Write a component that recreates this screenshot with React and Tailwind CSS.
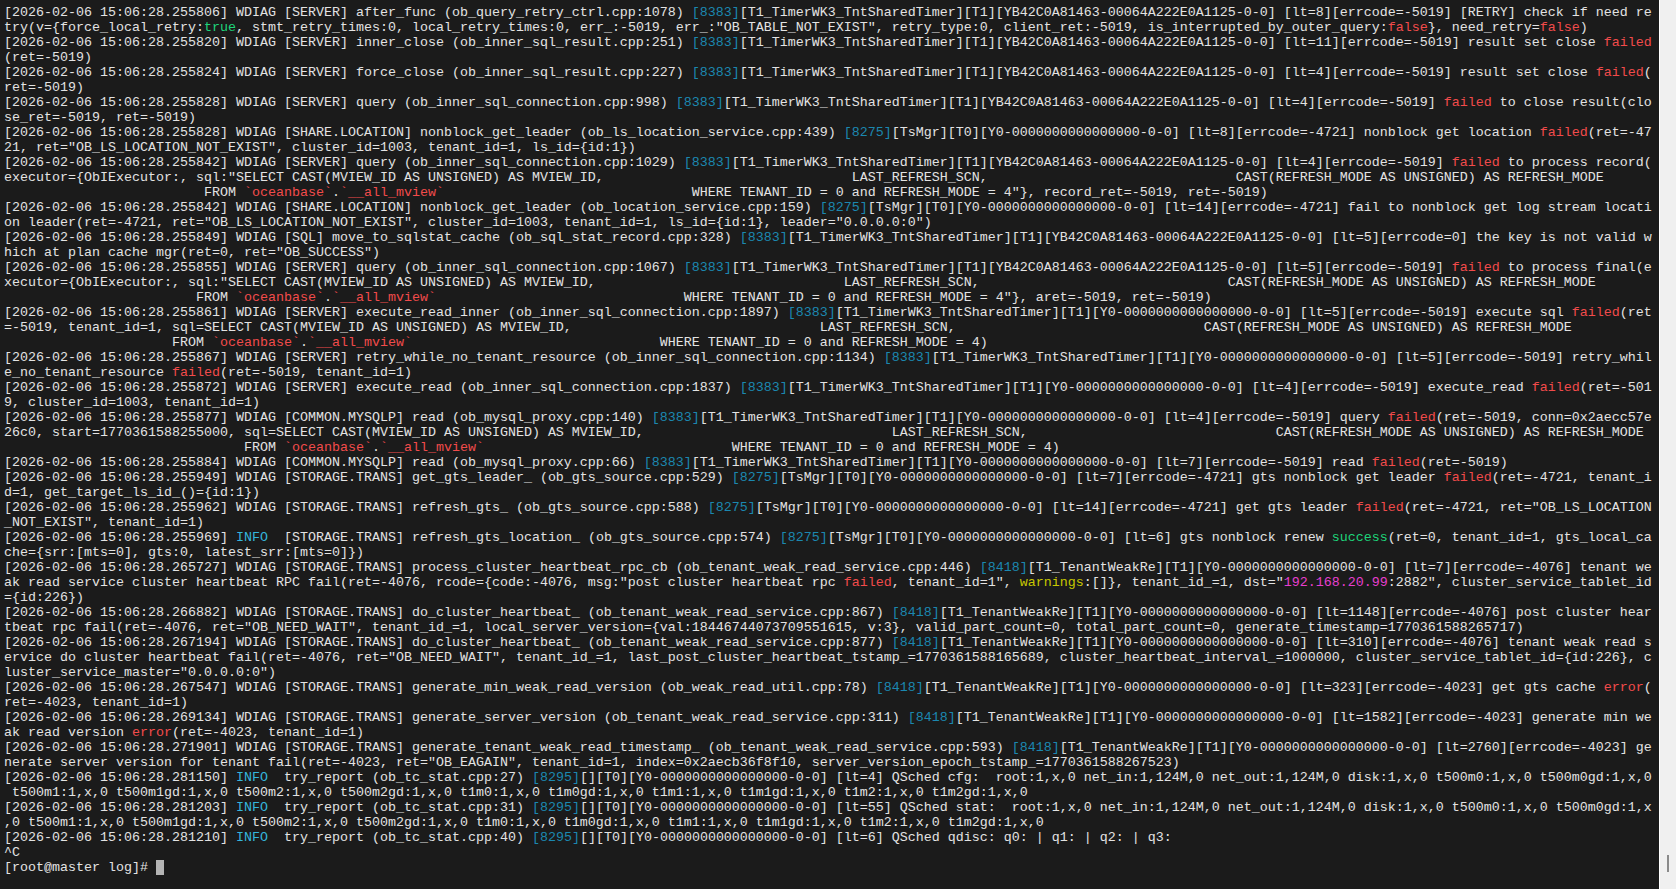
import React from "react";

const colors = {
  n: "text-[#1b88b0]",
  i: "text-[#35b5dc]",
  r: "text-[#f24b4b]",
  g: "text-[#1ed47a]",
  y: "text-[#c8c800]",
  m: "text-[#e83fd0]",
};

const gap = " ".repeat(31);

// {x:...} marks a coloured run
const lines = [
  "[2026-02-06 15:06:28.255806] WDIAG [SERVER] after_func (ob_query_retry_ctrl.cpp:1078) {n:[8383]}[T1_TimerWK3_TntSharedTimer][T1][YB42C0A81463-00064A222E0A1125-0-0] [lt=8][errcode=-5019] [RETRY] check if need re",
  "try(v={force_local_retry:{g:true}, stmt_retry_times:0, local_retry_times:0, err_:-5019, err_:\"OB_TABLE_NOT_EXIST\", retry_type:0, client_ret:-5019, is_interrupted_by_outer_query:{r:false}}, need_retry={r:false})",
  "[2026-02-06 15:06:28.255820] WDIAG [SERVER] inner_close (ob_inner_sql_result.cpp:251) {n:[8383]}[T1_TimerWK3_TntSharedTimer][T1][YB42C0A81463-00064A222E0A1125-0-0] [lt=11][errcode=-5019] result set close {r:failed}",
  "(ret=-5019)",
  "[2026-02-06 15:06:28.255824] WDIAG [SERVER] force_close (ob_inner_sql_result.cpp:227) {n:[8383]}[T1_TimerWK3_TntSharedTimer][T1][YB42C0A81463-00064A222E0A1125-0-0] [lt=4][errcode=-5019] result set close {r:failed}(",
  "ret=-5019)",
  "[2026-02-06 15:06:28.255828] WDIAG [SERVER] query (ob_inner_sql_connection.cpp:998) {n:[8383]}[T1_TimerWK3_TntSharedTimer][T1][YB42C0A81463-00064A222E0A1125-0-0] [lt=4][errcode=-5019] {r:failed} to close result(clo",
  "se_ret=-5019, ret=-5019)",
  "[2026-02-06 15:06:28.255828] WDIAG [SHARE.LOCATION] nonblock_get_leader (ob_ls_location_service.cpp:439) {n:[8275]}[TsMgr][T0][Y0-0000000000000000-0-0] [lt=8][errcode=-4721] nonblock get location {r:failed}(ret=-47",
  "21, ret=\"OB_LS_LOCATION_NOT_EXIST\", cluster_id=1003, tenant_id=1, ls_id={id:1})",
  "[2026-02-06 15:06:28.255842] WDIAG [SERVER] query (ob_inner_sql_connection.cpp:1029) {n:[8383]}[T1_TimerWK3_TntSharedTimer][T1][YB42C0A81463-00064A222E0A1125-0-0] [lt=4][errcode=-5019] {r:failed} to process record(",
  `executor={ObIExecutor:, sql:"SELECT CAST(MVIEW_ID AS UNSIGNED) AS MVIEW_ID,${gap}LAST_REFRESH_SCN,${gap}CAST(REFRESH_MODE AS UNSIGNED) AS REFRESH_MODE`,
  `                         FROM {r:\`oceanbase\`}.{r:\`__all_mview\`}${gap}WHERE TENANT_ID = 0 and REFRESH_MODE = 4"}, record_ret=-5019, ret=-5019)`,
  "[2026-02-06 15:06:28.255842] WDIAG [SHARE.LOCATION] nonblock_get_leader (ob_location_service.cpp:159) {n:[8275]}[TsMgr][T0][Y0-0000000000000000-0-0] [lt=14][errcode=-4721] fail to nonblock get log stream locati",
  "on leader(ret=-4721, ret=\"OB_LS_LOCATION_NOT_EXIST\", cluster_id=1003, tenant_id=1, ls_id={id:1}, leader=\"0.0.0.0:0\")",
  "[2026-02-06 15:06:28.255849] WDIAG [SQL] move_to_sqlstat_cache (ob_sql_stat_record.cpp:328) {n:[8383]}[T1_TimerWK3_TntSharedTimer][T1][YB42C0A81463-00064A222E0A1125-0-0] [lt=5][errcode=0] the key is not valid w",
  "hich at plan cache mgr(ret=0, ret=\"OB_SUCCESS\")",
  "[2026-02-06 15:06:28.255855] WDIAG [SERVER] query (ob_inner_sql_connection.cpp:1067) {n:[8383]}[T1_TimerWK3_TntSharedTimer][T1][YB42C0A81463-00064A222E0A1125-0-0] [lt=5][errcode=-5019] {r:failed} to process final(e",
  `xecutor={ObIExecutor:, sql:"SELECT CAST(MVIEW_ID AS UNSIGNED) AS MVIEW_ID,${gap}LAST_REFRESH_SCN,${gap}CAST(REFRESH_MODE AS UNSIGNED) AS REFRESH_MODE`,
  `                        FROM {r:\`oceanbase\`}.{r:\`__all_mview\`}${gap}WHERE TENANT_ID = 0 and REFRESH_MODE = 4"}, aret=-5019, ret=-5019)`,
  "[2026-02-06 15:06:28.255861] WDIAG [SERVER] execute_read_inner (ob_inner_sql_connection.cpp:1897) {n:[8383]}[T1_TimerWK3_TntSharedTimer][T1][Y0-0000000000000000-0-0] [lt=5][errcode=-5019] execute sql {r:failed}(ret",
  `=-5019, tenant_id=1, sql=SELECT CAST(MVIEW_ID AS UNSIGNED) AS MVIEW_ID,${gap}LAST_REFRESH_SCN,${gap}CAST(REFRESH_MODE AS UNSIGNED) AS REFRESH_MODE`,
  `                     FROM {r:\`oceanbase\`}.{r:\`__all_mview\`}${gap}WHERE TENANT_ID = 0 and REFRESH_MODE = 4)`,
  "[2026-02-06 15:06:28.255867] WDIAG [SERVER] retry_while_no_tenant_resource (ob_inner_sql_connection.cpp:1134) {n:[8383]}[T1_TimerWK3_TntSharedTimer][T1][Y0-0000000000000000-0-0] [lt=5][errcode=-5019] retry_whil",
  "e_no_tenant_resource {r:failed}(ret=-5019, tenant_id=1)",
  "[2026-02-06 15:06:28.255872] WDIAG [SERVER] execute_read (ob_inner_sql_connection.cpp:1837) {n:[8383]}[T1_TimerWK3_TntSharedTimer][T1][Y0-0000000000000000-0-0] [lt=4][errcode=-5019] execute_read {r:failed}(ret=-501",
  "9, cluster_id=1003, tenant_id=1)",
  "[2026-02-06 15:06:28.255877] WDIAG [COMMON.MYSQLP] read (ob_mysql_proxy.cpp:140) {n:[8383]}[T1_TimerWK3_TntSharedTimer][T1][Y0-0000000000000000-0-0] [lt=4][errcode=-5019] query {r:failed}(ret=-5019, conn=0x2aecc57e",
  `26c0, start=1770361588255000, sql=SELECT CAST(MVIEW_ID AS UNSIGNED) AS MVIEW_ID,${gap}LAST_REFRESH_SCN,${gap}CAST(REFRESH_MODE AS UNSIGNED) AS REFRESH_MODE`,
  `                              FROM {r:\`oceanbase\`}.{r:\`__all_mview\`}${gap}WHERE TENANT_ID = 0 and REFRESH_MODE = 4)`,
  "[2026-02-06 15:06:28.255884] WDIAG [COMMON.MYSQLP] read (ob_mysql_proxy.cpp:66) {n:[8383]}[T1_TimerWK3_TntSharedTimer][T1][Y0-0000000000000000-0-0] [lt=7][errcode=-5019] read {r:failed}(ret=-5019)",
  "[2026-02-06 15:06:28.255949] WDIAG [STORAGE.TRANS] get_gts_leader_ (ob_gts_source.cpp:529) {n:[8275]}[TsMgr][T0][Y0-0000000000000000-0-0] [lt=7][errcode=-4721] gts nonblock get leader {r:failed}(ret=-4721, tenant_i",
  "d=1, get_target_ls_id_()={id:1})",
  "[2026-02-06 15:06:28.255962] WDIAG [STORAGE.TRANS] refresh_gts_ (ob_gts_source.cpp:588) {n:[8275]}[TsMgr][T0][Y0-0000000000000000-0-0] [lt=14][errcode=-4721] get gts leader {r:failed}(ret=-4721, ret=\"OB_LS_LOCATION",
  "_NOT_EXIST\", tenant_id=1)",
  "[2026-02-06 15:06:28.255969] {i:INFO}  [STORAGE.TRANS] refresh_gts_location_ (ob_gts_source.cpp:574) {n:[8275]}[TsMgr][T0][Y0-0000000000000000-0-0] [lt=6] gts nonblock renew {g:success}(ret=0, tenant_id=1, gts_local_ca",
  "che={srr:[mts=0], gts:0, latest_srr:[mts=0]})",
  "[2026-02-06 15:06:28.265727] WDIAG [STORAGE.TRANS] process_cluster_heartbeat_rpc_cb (ob_tenant_weak_read_service.cpp:446) {n:[8418]}[T1_TenantWeakRe][T1][Y0-0000000000000000-0-0] [lt=7][errcode=-4076] tenant we",
  "ak read service cluster heartbeat RPC fail(ret=-4076, rcode={code:-4076, msg:\"post cluster heartbeat rpc {r:failed}, tenant_id=1\", {y:warnings}:[]}, tenant_id_=1, dst=\"{m:192.168.20.99}:2882\", cluster_service_tablet_id",
  "={id:226})",
  "[2026-02-06 15:06:28.266882] WDIAG [STORAGE.TRANS] do_cluster_heartbeat_ (ob_tenant_weak_read_service.cpp:867) {n:[8418]}[T1_TenantWeakRe][T1][Y0-0000000000000000-0-0] [lt=1148][errcode=-4076] post cluster hear",
  "tbeat rpc fail(ret=-4076, ret=\"OB_NEED_WAIT\", tenant_id_=1, local_server_version={val:18446744073709551615, v:3}, valid_part_count=0, total_part_count=0, generate_timestamp=1770361588265717)",
  "[2026-02-06 15:06:28.267194] WDIAG [STORAGE.TRANS] do_cluster_heartbeat_ (ob_tenant_weak_read_service.cpp:877) {n:[8418]}[T1_TenantWeakRe][T1][Y0-0000000000000000-0-0] [lt=310][errcode=-4076] tenant weak read s",
  "ervice do cluster heartbeat fail(ret=-4076, ret=\"OB_NEED_WAIT\", tenant_id_=1, last_post_cluster_heartbeat_tstamp_=1770361588165689, cluster_heartbeat_interval_=1000000, cluster_service_tablet_id={id:226}, c",
  "luster_service_master=\"0.0.0.0:0\")",
  "[2026-02-06 15:06:28.267547] WDIAG [STORAGE.TRANS] generate_min_weak_read_version (ob_weak_read_util.cpp:78) {n:[8418]}[T1_TenantWeakRe][T1][Y0-0000000000000000-0-0] [lt=323][errcode=-4023] get gts cache {r:error}(",
  "ret=-4023, tenant_id=1)",
  "[2026-02-06 15:06:28.269134] WDIAG [STORAGE.TRANS] generate_server_version (ob_tenant_weak_read_service.cpp:311) {n:[8418]}[T1_TenantWeakRe][T1][Y0-0000000000000000-0-0] [lt=1582][errcode=-4023] generate min we",
  "ak read version {r:error}(ret=-4023, tenant_id=1)",
  "[2026-02-06 15:06:28.271901] WDIAG [STORAGE.TRANS] generate_tenant_weak_read_timestamp_ (ob_tenant_weak_read_service.cpp:593) {n:[8418]}[T1_TenantWeakRe][T1][Y0-0000000000000000-0-0] [lt=2760][errcode=-4023] ge",
  "nerate server version for tenant fail(ret=-4023, ret=\"OB_EAGAIN\", tenant_id=1, index=0x2aecb36f8f10, server_version_epoch_tstamp_=1770361588267523)",
  "[2026-02-06 15:06:28.281150] {i:INFO}  try_report (ob_tc_stat.cpp:27) {n:[8295]}[][T0][Y0-0000000000000000-0-0] [lt=4] QSched cfg:  root:1,x,0 net_in:1,124M,0 net_out:1,124M,0 disk:1,x,0 t500m0:1,x,0 t500m0gd:1,x,0",
  " t500m1:1,x,0 t500m1gd:1,x,0 t500m2:1,x,0 t500m2gd:1,x,0 t1m0:1,x,0 t1m0gd:1,x,0 t1m1:1,x,0 t1m1gd:1,x,0 t1m2:1,x,0 t1m2gd:1,x,0",
  "[2026-02-06 15:06:28.281203] {i:INFO}  try_report (ob_tc_stat.cpp:31) {n:[8295]}[][T0][Y0-0000000000000000-0-0] [lt=55] QSched stat:  root:1,x,0 net_in:1,124M,0 net_out:1,124M,0 disk:1,x,0 t500m0:1,x,0 t500m0gd:1,x",
  ",0 t500m1:1,x,0 t500m1gd:1,x,0 t500m2:1,x,0 t500m2gd:1,x,0 t1m0:1,x,0 t1m0gd:1,x,0 t1m1:1,x,0 t1m1gd:1,x,0 t1m2:1,x,0 t1m2gd:1,x,0",
  "[2026-02-06 15:06:28.281210] {i:INFO}  try_report (ob_tc_stat.cpp:40) {n:[8295]}[][T0][Y0-0000000000000000-0-0] [lt=6] QSched qdisc: q0: | q1: | q2: | q3:",
  "^C",
];

const parse = (line) => {
  const out = [];
  const re = /\{([nigrym]):((?:[^{}]|\{[^}]*\})*?)\}/g;
  let last = 0;
  let m;
  while ((m = re.exec(line))) {
    if (m.index > last) out.push({ text: line.slice(last, m.index) });
    out.push({ text: m[2], cls: colors[m[1]] });
    last = m.index + m[0].length;
  }
  if (last < line.length) out.push({ text: line.slice(last) });
  return out;
};

const LogLine = ({ line }) => (
  <div className="h-[15px] whitespace-pre">
    {parse(line).map((part, idx) => (
      <span className={part.cls} key={idx}>{part.text}</span>
    ))}
  </div>
);

export default function App() {
  return (
    <div className="h-[889px] w-[1676px] flex bg-[#f0f0f0] overflow-hidden">
      <div className="w-[1659px] h-full bg-[#1b1b1b] text-[#e3e3e3] pl-1 pt-[5px] text-[13.33px] leading-[15px] font-['Liberation_Mono',monospace] overflow-hidden">
        {lines.map((line, idx) => (
          <LogLine line={line} key={idx} />
        ))}
        <div className="h-[15px] whitespace-pre flex items-center">
          <span>[root@master log]# </span>
          <span className="w-2 h-[15px] bg-[#b4b4b4]"></span>
        </div>
      </div>
      <div className="flex-1 border-l border-white">
        <div className="ml-[7px] mt-[855px] w-[2px] h-[17px] bg-[#8a8a8a]"></div>
      </div>
    </div>
  );
}
